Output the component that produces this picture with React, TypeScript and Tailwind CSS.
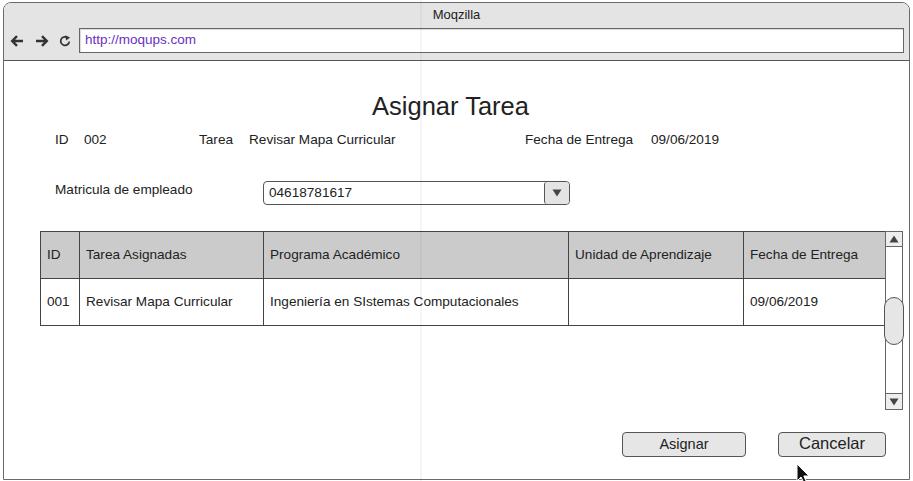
import React from 'react'

const font = { fontFamily: '"Liberation Sans", Arial, sans-serif' }

const columns = [
  { title: 'ID', w: 'w-[39px]', value: '001' },
  { title: 'Tarea Asignadas', w: 'w-[184px]', value: 'Revisar Mapa Curricular' },
  { title: 'Programa Académico', w: 'w-[305px]', value: 'Ingeniería en SIstemas Computacionales' },
  { title: 'Unidad de Aprendizaje', w: 'w-[175px]', value: '' },
  { title: 'Fecha de Entrega', w: 'w-[142px]', value: '09/06/2019' },
]

function Triangle({ up }: { up?: boolean }) {
  return (
    <svg width="10" height="8" viewBox="0 0 10 8">
      <path d={up ? 'M5 0.5L9.5 7.5H0.5Z' : 'M0.5 0.5H9.5L5 7.5Z'} fill="#444" />
    </svg>
  )
}

function NavIcons() {
  return (
    <div className="flex items-center gap-[11px] pl-[6px] pr-[8px]">
      {/* back */}
      <svg width="14" height="12" viewBox="0 0 14 12">
        <path d="M13 6H2.5M7 1.2L2.2 6L7 10.8" fill="none" stroke="#333" strokeWidth="2.4" />
      </svg>
      {/* forward */}
      <svg width="14" height="12" viewBox="0 0 14 12">
        <path d="M1 6h10.5M7 1.2L11.8 6L7 10.8" fill="none" stroke="#333" strokeWidth="2.4" />
      </svg>
      {/* reload */}
      <svg width="12" height="12" viewBox="0 0 12 12" className="-ml-[1px]">
        <path d="M10.3 6.5A4.3 4.3 0 1 1 7.6 2.1" fill="none" stroke="#333" strokeWidth="1.7" />
        <path d="M6.2 0.2L11 2.4L7.2 5.6z" fill="#333" />
      </svg>
    </div>
  )
}

export default function App() {
  return (
    <div className="relative w-[913px] h-[481px] bg-white overflow-hidden pt-[2px] pl-[3px] text-[#222]" style={font}>
      <div className="w-[907px] h-[478px] border border-[#6a6a6a] rounded-t-[8px] flex flex-col overflow-hidden bg-white">
        {/* browser chrome */}
        <div className="bg-[#e4e4e4] border-b border-[#555] h-[58px] flex flex-col">
          <div className="h-[24px] text-center text-[13px] leading-[24px]">Moqzilla</div>
          <div className="flex items-center h-[27px]">
            <NavIcons />
            <div className="w-[825px] h-[25px] bg-white border border-[#666] shadow-[inset_1px_1px_1px_rgba(0,0,0,0.15)] flex items-center pl-[5px] text-[13.5px] text-[#6a2fc0]">
              http://moqups.com
            </div>
          </div>
        </div>

        {/* page */}
        <div className="flex-1 flex flex-col">
          <h1 className="mt-[30px] text-center text-[25.5px] leading-[30px] pr-[12px]">Asignar Tarea</h1>

          <div className="mt-[10px] flex items-center pl-[51px] text-[13.6px] leading-[18px]">
            <span className="w-[29px]">ID</span>
            <span className="w-[115px]">002</span>
            <span className="w-[50px]">Tarea</span>
            <span className="w-[276px]">Revisar Mapa Curricular</span>
            <span className="w-[126px]">Fecha de Entrega</span>
            <span>09/06/2019</span>
          </div>

          <div className="mt-[32px] flex items-center pl-[51px] text-[13.6px]">
            <span className="w-[208px] -mt-[5px]">Matricula de empleado</span>
            <div className="w-[307px] h-[24px] border border-[#555] rounded-[4px] flex items-stretch overflow-hidden">
              <div className="flex-1 flex items-center pl-[5px]">04618781617</div>
              <div className="w-[25px] border-l border-[#555] bg-[#e4e4e4] rounded-[3px] flex items-center justify-center">
                <Triangle />
              </div>
            </div>
          </div>

          {/* table + scrollbar */}
          <div className="mt-[26px] flex pl-[36px]">
            <div className="flex flex-col self-start border-l border-t border-[#444] text-[13.6px]">
              <div className="flex h-[47px] bg-[#cbcbcb] border-b border-[#444]">
                {columns.map((c) => (
                  <div key={c.title} className={`${c.w} border-r border-[#444] flex items-center pl-[6px]`}>
                    {c.title}
                  </div>
                ))}
              </div>
              <div className="flex h-[47px] border-b border-[#444]">
                {columns.map((c) => (
                  <div key={c.title} className={`${c.w} border-r border-[#444] flex items-center pl-[6px]`}>
                    {c.value}
                  </div>
                ))}
              </div>
            </div>

            <div className="w-[18px] h-[179px] -ml-[1px] border border-[#666] bg-white flex flex-col">
              <div className="h-[15px] border-b border-[#666] bg-[#eee] flex items-center justify-center">
                <Triangle up />
              </div>
              <div className="flex-1 flex flex-col">
                <div className="h-[50px]" />
                <div className="h-[48px] -mx-[2px] border border-[#555] rounded-[10px] bg-[#e6e6e6]" />
              </div>
              <div className="h-[16px] border-t border-[#666] bg-[#eee] flex items-center justify-center">
                <Triangle />
              </div>
            </div>
          </div>

          <div className="mt-[22px] flex justify-end pr-[23px] gap-[32px]">
            <button className="w-[124px] h-[25px] border border-[#555] rounded-[4px] bg-[#e6e6e6] text-[14.5px] leading-none">
              Asignar
            </button>
            <button className="w-[108px] h-[25px] border border-[#555] rounded-[4px] bg-[#e6e6e6] text-[16.5px] leading-none pb-[2px]">
              Cancelar
            </button>
          </div>
        </div>
      </div>

      {/* faint guide line */}
      <div className="pointer-events-none absolute top-0 left-[420px] w-[2px] h-[481px] bg-black/[0.04]" />

      {/* mouse cursor */}
      <svg className="absolute left-[796px] top-[463px]" width="20" height="22" viewBox="0 0 20 22">
        <path d="M1 1L1 18L5 14L8.5 21L11 20L7.8 13L13 13Z" fill="#111" stroke="#fff" strokeWidth="1" />
      </svg>
    </div>
  )
}
